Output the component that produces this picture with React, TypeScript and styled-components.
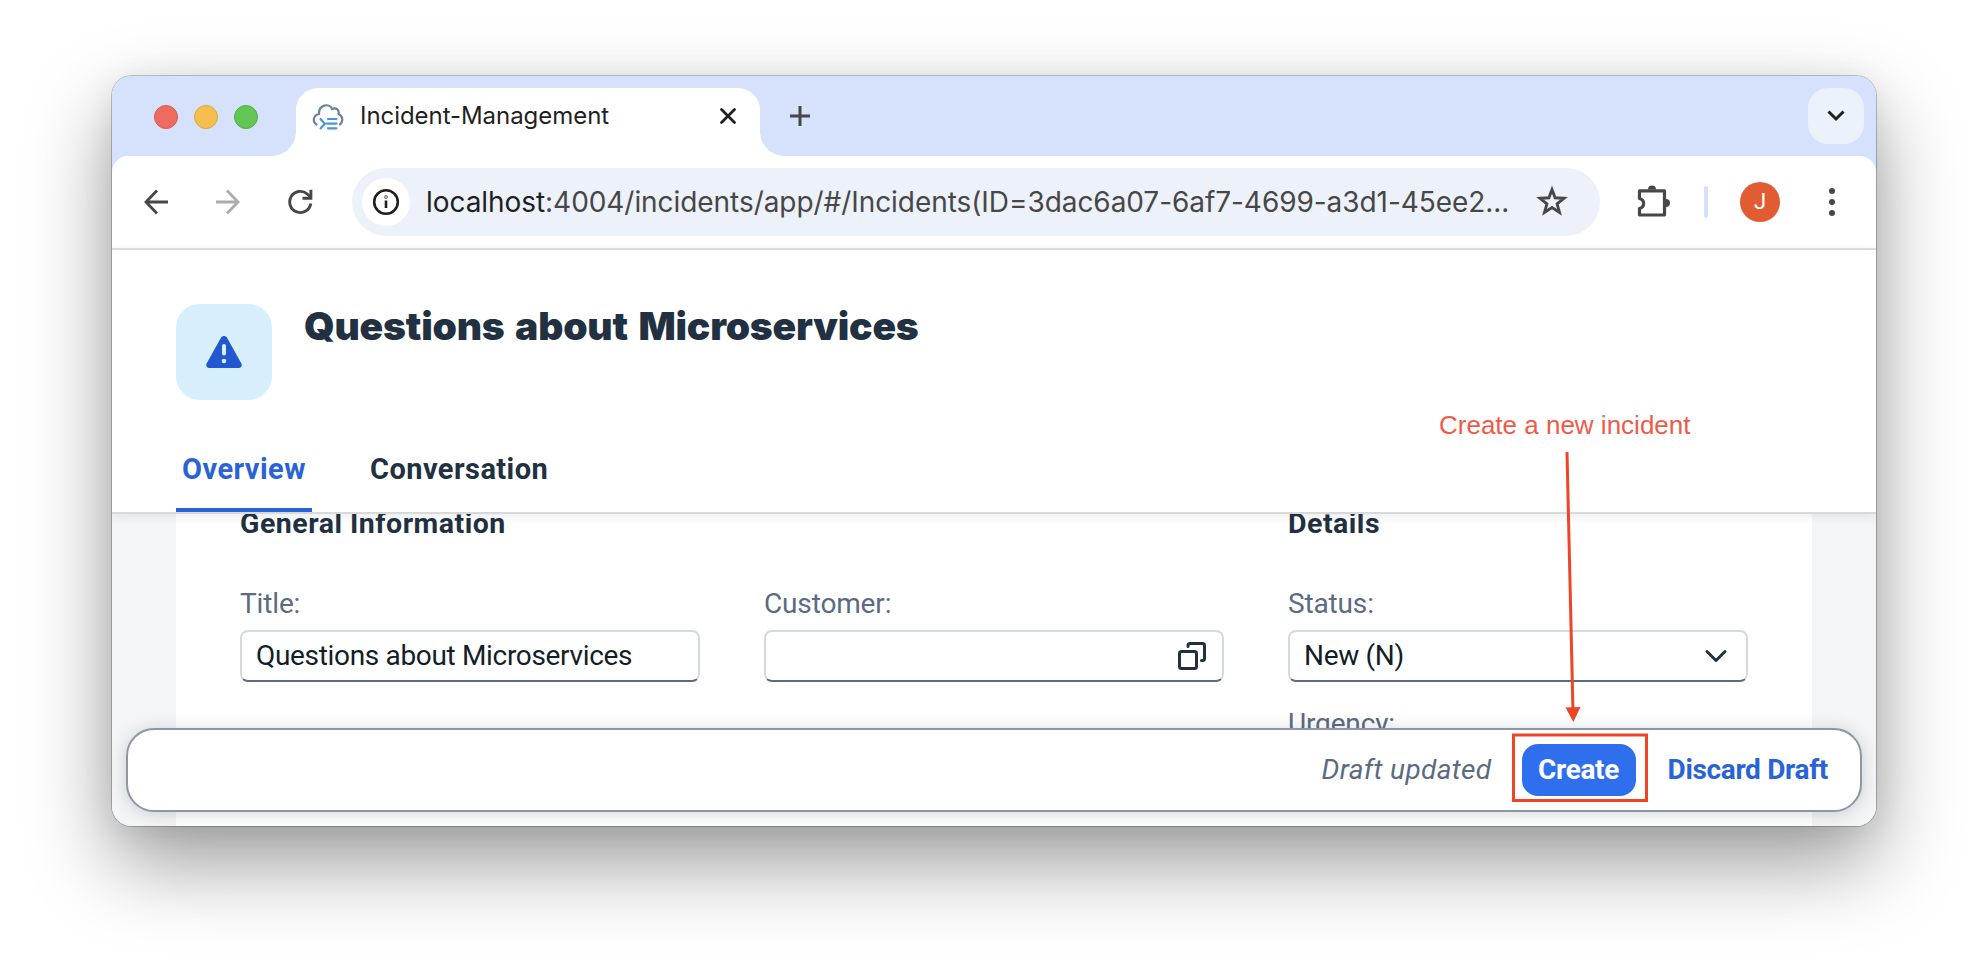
import React from 'react';
import styled, { createGlobalStyle } from 'styled-components';

const Global = createGlobalStyle`
  * { box-sizing: border-box; }
  body { margin: 0; background: #fff; font-family: Roboto, "Liberation Sans", sans-serif; }
`;

const Desktop = styled.main`
  position: relative;
  width: 1988px;
  height: 974px;
  padding: 76px 112px 148px;
  overflow: hidden;
`;
const Window = styled.div`
  width: 1764px;
  height: 750px;
  display: flex;
  flex-direction: column;
  border-radius: 20px;
  box-shadow: 0 0 0 1px rgba(0, 0, 0, 0.22), 0 36px 84px rgba(0, 0, 0, 0.4), 0 4px 32px rgba(0, 0, 0, 0.07);
`;
const Clip = styled.div`
  flex: 1;
  display: flex;
  flex-direction: column;
  border-radius: 20px;
  overflow: hidden;
  background: #d6e1fc;
`;
const TabStrip = styled.div`
  height: 80px;
  display: flex;
  align-items: flex-start;
  padding: 12px 12px 0 42px;
`;
const Lights = styled.div`
  display: flex;
  gap: 16px;
  margin-top: 17px;
  width: 142px;
`;
const Light = styled.span<{ $color: string; $edge: string }>`
  width: 24px;
  height: 24px;
  border-radius: 50%;
  background: ${p => p.$color};
  border: 1px solid ${p => p.$edge};
`;
const Tab = styled.div`
  position: relative;
  width: 464px;
  height: 68px;
  display: flex;
  align-items: flex-start;
  padding: 14px 22px 0 16px;
  background: #fff;
  border-radius: 22px 22px 0 0;
  &::before, &::after {
    content: '';
    position: absolute;
    bottom: 0;
    width: 24px;
    height: 24px;
  }
  &::before { left: -24px; background: radial-gradient(circle at 0 0, transparent 23.5px, #fff 24px); }
  &::after { right: -24px; background: radial-gradient(circle at 100% 0, transparent 23.5px, #fff 24px); }
`;
const TabTitle = styled.span`
  flex: 1;
  margin-left: 16px;
  font: 400 24px/28px Inter, sans-serif;
  letter-spacing: -0.05px;
  color: #1f1f1f;
  white-space: nowrap;
`;
const NewTab = styled.div`
  flex: 1;
  padding: 18px 0 0 30px;
`;
const TabSearch = styled.div`
  width: 56px;
  height: 56px;
  border-radius: 20px;
  background: #ebf2fc;
  display: grid;
  place-items: center;
`;
const Toolbar = styled.div`
  height: 94px;
  flex: none;
  display: flex;
  align-items: center;
  padding: 0 41px 0 32px;
  background: #fff;
  border-bottom: 2px solid #e1e1e1;
  border-radius: 16px 16px 0 0;
`;
const NavButtons = styled.div`
  display: flex;
  gap: 48px;
  width: 208px;
  svg { display: block; }
`;
const Omnibox = styled.div`
  width: 1248px;
  height: 68px;
  display: flex;
  align-items: center;
  padding: 0 32px 0 10px;
  border-radius: 34px;
  background: #edf2fa;
`;
const SiteInfo = styled.span`
  width: 48px;
  height: 48px;
  border-radius: 50%;
  background: #fff;
  display: grid;
  place-items: center;
`;
const Url = styled.span`
  flex: 1;
  margin-left: 16px;
  font: 400 28px/36px Inter, sans-serif;
  letter-spacing: -0.06px;
  color: #474747;
  white-space: nowrap;
  b { font-weight: 400; color: #1f1f1f; }
`;
const Actions = styled.div`
  flex: 1;
  display: flex;
  align-items: center;
  justify-content: flex-end;
`;
const Divider = styled.span`
  width: 4px;
  height: 32px;
  margin: 0 32px 0 34px;
  border-radius: 2px;
  background: #d3e1fd;
`;
const Profile = styled.span`
  width: 40px;
  height: 40px;
  margin-right: 49px;
  border-radius: 50%;
  background: #e25c33;
  color: #fff;
  font: 400 22px/40px Roboto, sans-serif;
  text-align: center;
`;
const Dots = styled.span`
  display: flex;
  flex-direction: column;
  gap: 5px;
  i { width: 6px; height: 6px; border-radius: 50%; background: #474747; }
`;
const Page = styled.div`
  flex: 1;
  display: flex;
  flex-direction: column;
  background: #f4f5f7;
`;
const Header = styled.header`
  position: relative;
  z-index: 1;
  height: 264px;
  flex: none;
  display: flex;
  flex-direction: column;
  justify-content: space-between;
  padding: 54px 64px 0;
  background: #fff;
  border-bottom: 2px solid #d9d9da;
  box-shadow: 0 2px 10px rgba(34, 53, 72, 0.1);
`;
const Identity = styled.div`
  display: flex;
  gap: 32px;
`;
const ObjectIcon = styled.div`
  width: 96px;
  height: 96px;
  border-radius: 24px;
  background: #d7eefd;
  display: grid;
  place-items: center;
`;
const Heading = styled.h1`
  margin: 0;
  font: 900 39px/44px Inter, sans-serif;
  letter-spacing: -0.2px;
  word-spacing: 3px;
  color: #223142;
`;
const Anchors = styled.nav`
  display: flex;
  gap: 52px;
`;
const Anchor = styled.a<{ $active?: boolean }>`
  height: 70px;
  padding: 11px 6px 0;
  font: 700 29px/32px Roboto, sans-serif;
  letter-spacing: 0.45px;
  border-radius: 5px 5px 0 0;
  color: ${p => (p.$active ? '#2a63d6' : '#223142')};
  background: ${p => (p.$active ? 'linear-gradient(#2a63d6, #2a63d6) bottom / 100% 4px no-repeat' : 'none')};
`;
const Sheet = styled.section`
  flex: 1;
  min-height: 0;
  overflow: hidden;
  display: grid;
  grid-template-columns: repeat(3, 460px);
  column-gap: 64px;
  align-content: start;
  margin: 0 64px;
  padding: 0 64px;
  background: #fff;
`;
const GroupTitle = styled.h2<{ $span?: number }>`
  grid-column: span ${p => p.$span ?? 1};
  height: 79px;
  margin: -7px 0 0;
  font: 700 28.5px/34px Roboto, sans-serif;
  letter-spacing: 0.5px;
  color: #223142;
`;
const Column = styled.div`
  display: flex;
  flex-direction: column;
  gap: 24px;
`;
const Field = styled.label`
  display: flex;
  flex-direction: column;
  gap: 8px;
`;
const Label = styled.span`
  font: 400 28px/36px Roboto, sans-serif;
  letter-spacing: -0.15px;
  color: #5b6b82;
`;
const Input = styled.span`
  height: 52px;
  display: flex;
  align-items: center;
  justify-content: space-between;
  padding: 0 16px 0 14px;
  border: 2px solid #d5dade;
  border-bottom-color: #5b6b82;
  border-radius: 8px;
  font: 400 28px/32px Roboto, sans-serif;
  letter-spacing: -0.33px;
  color: #131e29;
`;
const Footer = styled.footer`
  position: relative;
  z-index: 2;
  flex: none;
  height: 84px;
  margin: -98px 14px 14px;
  display: flex;
  align-items: center;
  justify-content: flex-end;
  padding-right: 32px;
  border: 2px solid #8c97a5;
  border-radius: 28px;
  background: #fff;
  box-shadow: 0 2px 18px rgba(34, 53, 72, 0.2);
`;
const DraftNote = styled.span`
  font: italic 400 28px/34px Roboto, sans-serif;
  letter-spacing: 0.36px;
  color: #5b6b82;
`;
const Action = styled.button<{ $primary?: boolean }>`
  height: 52px;
  padding: 0;
  border: 0;
  border-radius: 16px;
  font: 700 28px/34px Roboto, sans-serif;
  letter-spacing: -0.33px;
  color: ${p => (p.$primary ? '#fff' : '#2a63d6')};
  background: ${p => (p.$primary ? '#2f6eec' : 'transparent')};
  width: ${p => (p.$primary ? '114px' : 'auto')};
  margin: ${p => (p.$primary ? '0 32px 0 30px' : '0')};
`;
const Note = styled.span`
  position: absolute;
  left: 1439px;
  top: 409px;
  z-index: 3;
  font: 400 26px/32px "Liberation Sans", sans-serif;
  color: #ef5a49;
  white-space: nowrap;
`;
const Marks = styled.svg`
  position: absolute;
  left: 1500px;
  top: 440px;
  z-index: 3;
  pointer-events: none;
`;

const CloudIcon = () => (
  <svg width="32" height="30" viewBox="0 0 32 30" fill="none" strokeLinecap="round" strokeLinejoin="round">
    <path d="M4.500 22.500C0 19.500 1.500 13 7 12C6.500 2.800 17.500 .6 20 7C24.500 5 27.500 8.500 26.500 12C31 14 31.500 19.500 28 22.300" stroke="#6a829c" strokeWidth="2.200" />
    <path d="M8.500 17l4.300 4.800L8.500 26.500M16 17h8.500M14.800 21.600H24.500M16 26.300h8.500" stroke="#4a97d8" strokeWidth="2.200" />
  </svg>
);
const BackIcon = ({ color, flip }: { color: string; flip?: boolean }) => (
  <svg width="24" height="26" viewBox="0 0 24 26" fill="none" stroke={color} strokeWidth="2.800" transform={flip ? 'scale(-1 1)' : undefined}>
    <path d="M24 13H2M13 1.500L2 13L13 24.500" />
  </svg>
);
const ReloadIcon = () => (
  <svg width="26" height="26" viewBox="0 0 26 26" fill="none" stroke="#474747" strokeWidth="2.900">
    <path d="M22.800 14.500A10.600 10.600 0 1 1 19.300 5L22.500 8" />
    <path d="M22.900 .8V9.200H14.500" />
  </svg>
);

export default function App() {
  return (
    <Desktop>
      <Global />
      <Window>
        <Clip>
          <TabStrip>
            <Lights>
              <Light $color="#ed6b5f" $edge="#d9594f" />
              <Light $color="#f5bf4f" $edge="#dca73c" />
              <Light $color="#62c554" $edge="#52ae43" />
            </Lights>
            <Tab>
              <CloudIcon />
              <TabTitle>Incident-Management</TabTitle>
              <svg width="20" height="28" viewBox="0 0 20 28" stroke="#1f1f1f" strokeWidth="2.800"><path d="M3.500 7.500l13 13M16.500 7.500l-13 13" strokeLinecap="round" /></svg>
            </Tab>
            <NewTab>
              <svg width="20" height="20" viewBox="0 0 20 20" stroke="#474747" strokeWidth="3"><path d="M10 0v20M0 10h20" /></svg>
            </NewTab>
            <TabSearch>
              <svg width="20" height="12" viewBox="0 0 20 12" fill="none" stroke="#1f1f1f" strokeWidth="3"><path d="M2.500 1.500L10 9L17.500 1.500" /></svg>
            </TabSearch>
          </TabStrip>
          <Toolbar>
            <NavButtons>
              <BackIcon color="#474747" />
              <BackIcon color="#acacac" flip />
              <ReloadIcon />
            </NavButtons>
            <Omnibox>
              <SiteInfo>
                <svg width="28" height="28" viewBox="0 0 28 28" fill="none" stroke="#1f1f1f" strokeWidth="2.600"><circle cx="14" cy="14" r="11.800" /><path d="M14 12.600v7.400" /><circle cx="14" cy="9" r=".4" /></svg>
              </SiteInfo>
              <Url><b>localhost</b>:4004/incidents/app/#/Incidents(ID=3dac6a07-6af7-4699-a3d1-45ee2...</Url>
              <svg width="32" height="32" viewBox="0 0 32 32" fill="none" stroke="#474747" strokeWidth="2.900"><path d="M16 3.600L19.100 11.800L28 12.300L21.100 17.800L23.500 26.500L16 21.600L8.500 26.500L10.900 17.800L4 12.300L12.900 11.800Z" /></svg>
            </Omnibox>
            <Actions>
              <svg width="34" height="34" viewBox="0 0 34 34"><path d="M3.500 5.800H28.500V30H3.500V23.500C9 22 9 15 3.500 13.500Z" fill="none" stroke="#474747" strokeWidth="3.200" strokeLinejoin="round" /><path d="M12 4.500a4 4 0 0 1 8 0zM30 14a4 4 0 0 1 0 8z" fill="#474747" /></svg>
              <Divider />
              <Profile>J</Profile>
              <Dots><i /><i /><i /></Dots>
            </Actions>
          </Toolbar>
          <Page>
            <Header>
              <Identity>
                <ObjectIcon>
                  <svg width="36" height="32" viewBox="0 0 36 32"><path d="M18 0c1.300 0 2.300.6 3 1.800L35.400 27.500c1.100 2-.3 4.500-2.700 4.500H3.300C.9 32-.5 29.500.6 27.500L15 1.800C15.700.6 16.700 0 18 0z" fill="#2257cf" /><path d="M18 10v7.500" stroke="#d7eefd" strokeWidth="4" strokeLinecap="round" /><circle cx="18" cy="25" r="2.300" fill="#d7eefd" /></svg>
                </ObjectIcon>
                <Heading>Questions about Microservices</Heading>
              </Identity>
              <Anchors>
                <Anchor $active>Overview</Anchor>
                <Anchor>Conversation</Anchor>
              </Anchors>
            </Header>
            <Sheet>
              <GroupTitle $span={2}>General Information</GroupTitle>
              <GroupTitle>Details</GroupTitle>
              <Column>
                <Field><Label>Title:</Label><Input>Questions about Microservices</Input></Field>
              </Column>
              <Column>
                <Field>
                  <Label>Customer:</Label>
                  <Input>
                    <span />
                    <svg width="28" height="28" viewBox="0 0 28 28" fill="none" stroke="#223142" strokeWidth="3" strokeLinecap="round" strokeLinejoin="round"><rect x="1.500" y="9.500" width="17" height="17" rx="2" /><path d="M10 4.500V3.500a2 2 0 0 1 2-2H24.500a2 2 0 0 1 2 2V16.500a2 2 0 0 1-2 2H23.500" /></svg>
                  </Input>
                </Field>
              </Column>
              <Column>
                <Field>
                  <Label>Status:</Label>
                  <Input>
                    New (N)
                    <svg width="26" height="14" viewBox="0 0 26 14" fill="none" stroke="#223142" strokeWidth="3" strokeLinecap="round" strokeLinejoin="round"><path d="M3 2.500L12 11.500L21 2.500" /></svg>
                  </Input>
                </Field>
                <Field><Label>Urgency:</Label></Field>
              </Column>
            </Sheet>
            <Footer>
              <DraftNote>Draft updated</DraftNote>
              <Action $primary>Create</Action>
              <Action>Discard Draft</Action>
            </Footer>
          </Page>
        </Clip>
      </Window>
      <Note>Create a new incident</Note>
      <Marks width="160" height="370" viewBox="0 0 160 370">
        <path d="M67 12L73 272" stroke="#ed4526" strokeWidth="3" />
        <path d="M65.500 267.500L80.500 267L73.300 282Z" fill="#ed4526" />
        <rect x="13.500" y="295" width="133" height="65.500" fill="none" stroke="#ed4526" strokeWidth="3" />
      </Marks>
    </Desktop>
  );
}
